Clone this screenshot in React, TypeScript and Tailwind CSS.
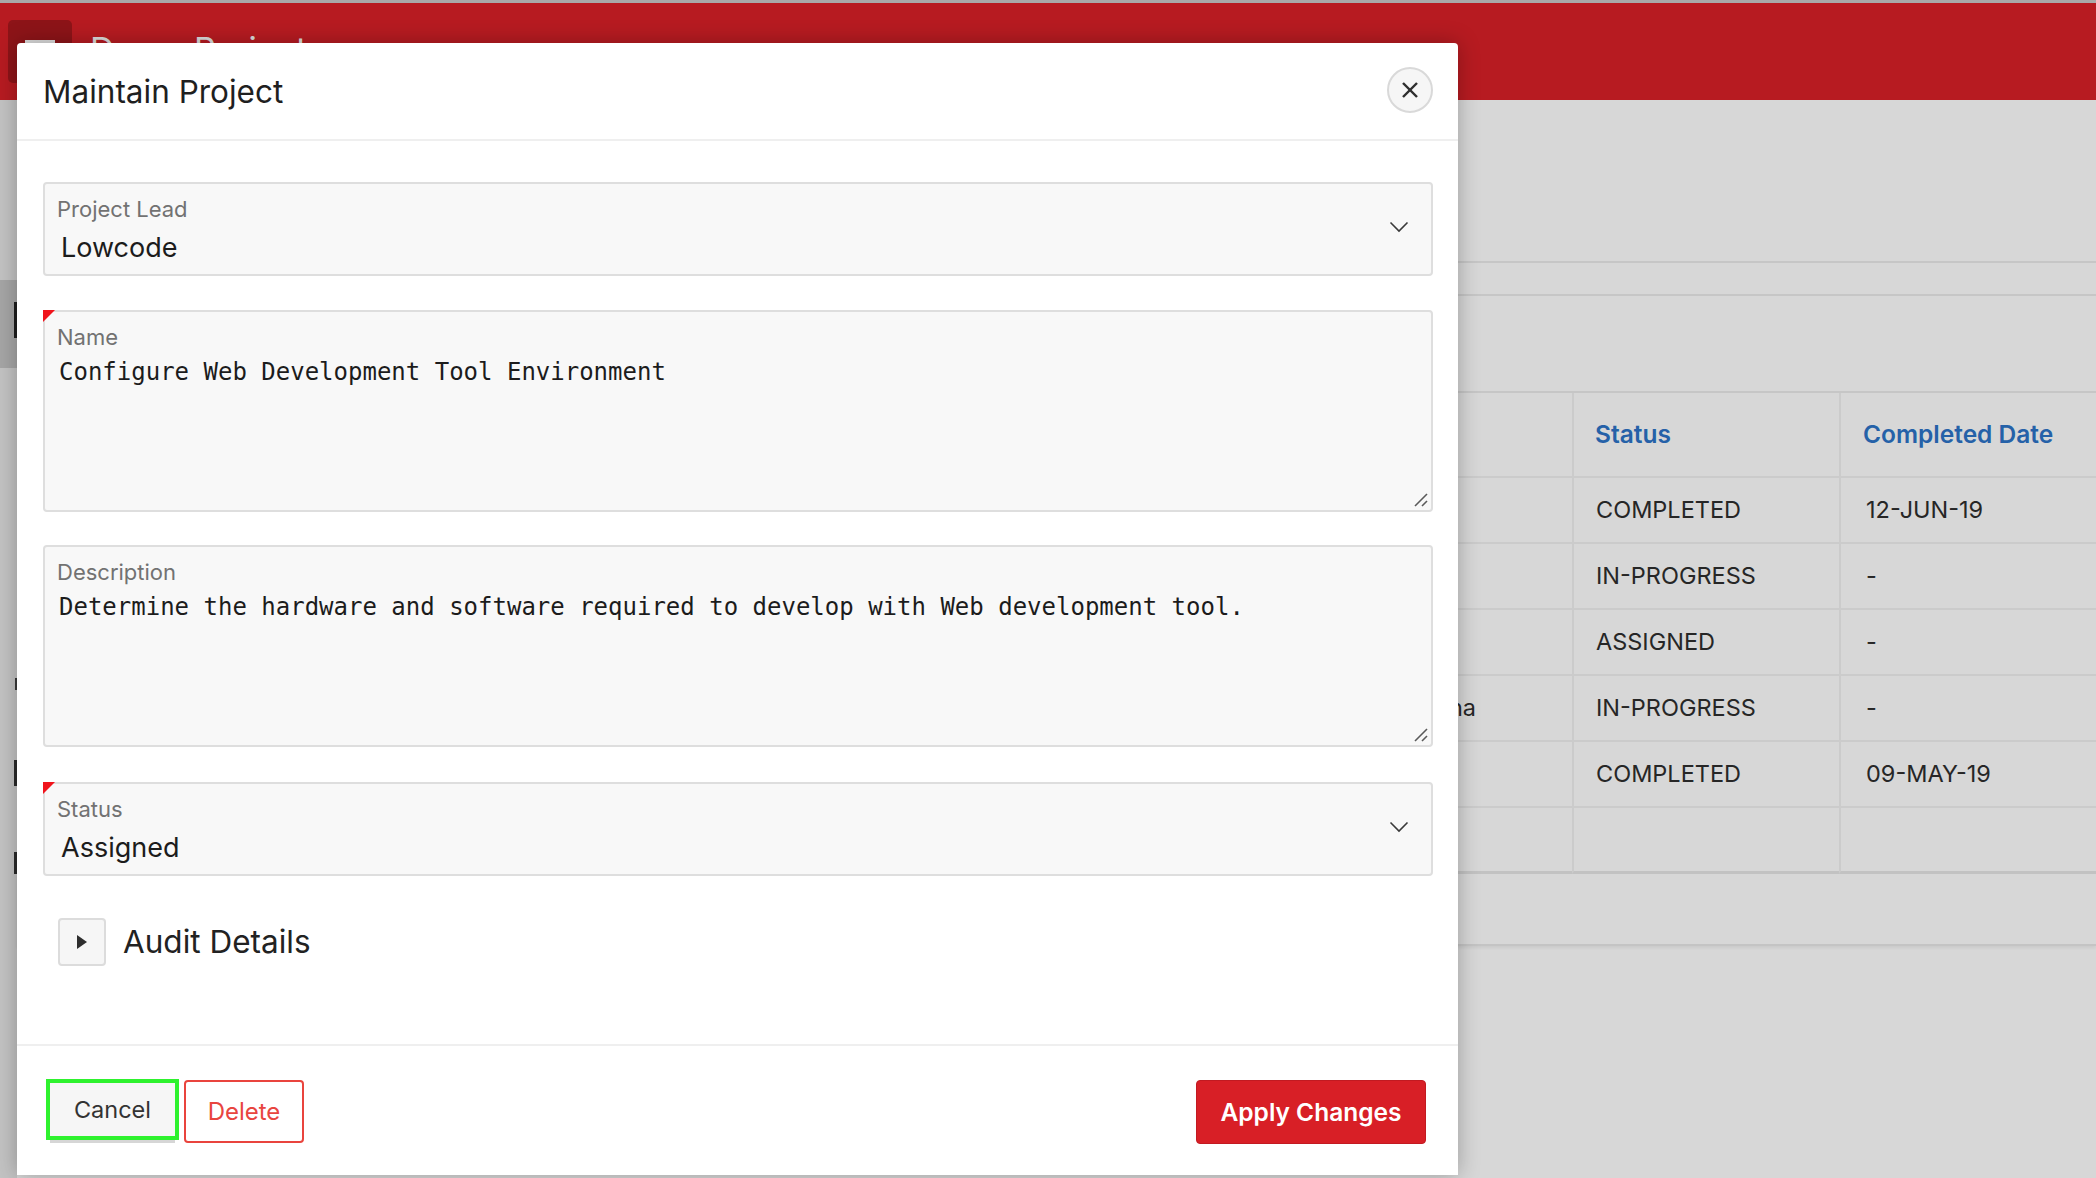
import React from 'react';

const rows = [
  { name: '', status: 'COMPLETED', date: '12-JUN-19' },
  { name: '', status: 'IN-PROGRESS', date: '-' },
  { name: '', status: 'ASSIGNED', date: '-' },
  { name: 'Krishna', status: 'IN-PROGRESS', date: '-' },
  { name: '', status: 'COMPLETED', date: '09-MAY-19' },
  { name: '', status: '', date: '' },
];

function Chevron() {
  return (
    <svg width="20" height="12" viewBox="0 0 20 12" fill="none">
      <polyline points="1.5,1.5 10,10 18.5,1.5" stroke="#3a3a3a" strokeWidth="1.6" />
    </svg>
  );
}

function RequiredMark() {
  return (
    <svg className="absolute -left-[2px] -top-[2px]" width="12" height="12" viewBox="0 0 12 12">
      <polygon points="0,0 12,0 0,12" fill="#f0141c" />
    </svg>
  );
}

function ResizeHandle() {
  return (
    <svg className="absolute bottom-[2px] right-[2px]" width="16" height="16" viewBox="0 0 16 16">
      <line x1="2" y1="14" x2="14" y2="2" stroke="#5a5a5a" strokeWidth="1.6" />
      <line x1="9" y1="14" x2="14" y2="9" stroke="#5a5a5a" strokeWidth="1.6" />
    </svg>
  );
}

function SelectField({ label, value, required }: { label: string; value: string; required?: boolean }) {
  return (
    <div className="relative flex h-[94px] items-start justify-between rounded-[4px] border-2 border-[#dedede] bg-[#f8f8f8] pl-[12px] pr-[22px] pt-[13px]">
      {required && <RequiredMark />}
      <div className="flex flex-col">
        <span className="text-[22px] leading-[24px] text-[#727272]">{label}</span>
        <span className="mt-[10px] pl-[4px] text-[27px] leading-[34px] text-[#1c1c1c]">{value}</span>
      </div>
      <div className="mt-[24px]">
        <Chevron />
      </div>
    </div>
  );
}

function TextField({ label, value, required }: { label: string; value: string; required?: boolean }) {
  return (
    <div className="relative flex h-[202px] flex-col rounded-[4px] border-2 border-[#dedede] bg-[#f8f8f8] pl-[12px] pt-[13px]">
      {required && <RequiredMark />}
      <span className="text-[22px] leading-[24px] text-[#727272]">{label}</span>
      <span className="mt-[8px] pl-[2px] font-['DejaVu_Sans_Mono',monospace] text-[24px] leading-[30px] text-[#1c1c1c]">
        {value}
      </span>
      <ResizeHandle />
    </div>
  );
}

export default function App() {
  const last = rows.length - 1;
  return (
    <div className="relative h-[1178px] w-[2096px] overflow-hidden bg-[#d7d7d7] font-['Inter',sans-serif]">
      {/* PAGE BEHIND THE MODAL */}
      <div className="h-[3px] bg-[#a9a9a9]" />
      <header className="flex h-[97px] items-start bg-[#b71b21] pl-[8px] pt-[17px]">
        <div className="flex h-[63px] w-[64px] flex-col items-center justify-center gap-[6px] rounded-[5px] bg-[#8d1418]">
          <span className="h-[4px] w-[30px] bg-[#dcdcdc]" />
          <span className="h-[4px] w-[30px] bg-[#dcdcdc]" />
          <span className="h-[4px] w-[30px] bg-[#dcdcdc]" />
        </div>
        <span className="ml-[18px] mt-[10px] text-[34px] leading-[40px] text-[#dcdcdc]">Demo Project</span>
      </header>

      <div className="flex h-[1078px]">
        {/* sidebar sliver */}
        <aside className="flex w-[17px] shrink-0 flex-col bg-[#c3c3c3]">
          <div className="h-[180px]" />
          <div className="flex h-[88px] items-center justify-end bg-[#a6a6a6]">
            <span className="mb-[8px] h-[36px] w-[3px] bg-[#1e1e1e]" />
          </div>
          <div className="h-[310px]" />
          <div className="flex justify-end">
            <span className="h-[12px] w-[2px] bg-[#3a3a3a]" />
          </div>
          <div className="h-[70px]" />
          <div className="flex justify-end">
            <span className="h-[26px] w-[3px] bg-[#2a2a2a]" />
          </div>
          <div className="h-[66px]" />
          <div className="flex justify-end">
            <span className="h-[22px] w-[3px] bg-[#2a2a2a]" />
          </div>
        </aside>

        {/* main content */}
        <main className="flex flex-1 flex-col">
          <div className="h-[163px] border-b-2 border-[#c6c6c6]" />
          <div className="h-[33px] border-b-2 border-[#c6c6c6]" />
          <div className="h-[97px] border-b-2 border-[#c6c6c6]" />
          <div className="grid grid-cols-[1fr_267px_257px]">
            <div className="h-[85px] border-b-2 border-[#cbcbcb]" />
            <div className="flex h-[85px] items-center border-b-2 border-l-2 border-[#cbcbcb] pl-[21px] text-[24.5px] font-semibold text-[#2561a8]">
              Status
            </div>
            <div className="flex h-[85px] items-center border-b-2 border-l-2 border-[#cbcbcb] pl-[22px] text-[24.5px] font-semibold text-[#2561a8]">
              Completed Date
            </div>
            {rows.map((row, idx) => (
              <React.Fragment key={idx}>
                <div
                  className={`flex h-[66px] items-center justify-end pr-[96px] text-[23.5px] text-[#262626] ${
                    idx === last ? 'border-b-[3px] border-[#c2c2c2]' : 'border-b-2 border-[#cbcbcb]'
                  }`}
                >
                  {row.name}
                </div>
                <div
                  className={`flex h-[66px] items-center border-l-2 border-[#cbcbcb] pl-[22px] text-[23.5px] text-[#262626] ${
                    idx === last ? 'border-b-[3px] border-b-[#c2c2c2]' : 'border-b-2'
                  }`}
                >
                  {row.status}
                </div>
                <div
                  className={`flex h-[66px] items-center border-l-2 border-[#cbcbcb] pl-[25px] text-[23.5px] text-[#262626] ${
                    idx === last ? 'border-b-[3px] border-b-[#c2c2c2]' : 'border-b-2'
                  }`}
                >
                  {row.date}
                </div>
              </React.Fragment>
            ))}
          </div>
          <div className="h-[72px] border-b-2 border-[#c4c4c4] shadow-[0_2px_3px_rgba(0,0,0,0.06)]" />
        </main>
      </div>

      {/* MODAL */}
      <div className="absolute left-[17px] top-[43px] flex h-[1132px] w-[1441px] flex-col rounded-t-[4px] bg-white shadow-[0_0_22px_rgba(0,0,0,0.28)]">
        <div className="flex h-[98px] shrink-0 items-center justify-between border-b-2 border-[#efefef] pl-[26px] pr-[25px] pt-[2px]">
          <h1 className="text-[31.5px] font-normal text-[#1f1f1f]">Maintain Project</h1>
          <button className="mt-[-4px] flex h-[46px] w-[46px] items-center justify-center rounded-full border-2 border-[#d9d9d9] bg-[#f6f6f6]">
            <svg width="18" height="18" viewBox="0 0 18 18">
              <line x1="2" y1="2" x2="16" y2="16" stroke="#2e2e2e" strokeWidth="2.4" />
              <line x1="16" y1="2" x2="2" y2="16" stroke="#2e2e2e" strokeWidth="2.4" />
            </svg>
          </button>
        </div>

        <div className="flex flex-1 flex-col pl-[26px] pr-[25px] pt-[41px]">
          <SelectField label="Project Lead" value="Lowcode" />
          <div className="mt-[34px]">
            <TextField label="Name" value="Configure Web Development Tool Environment" required />
          </div>
          <div className="mt-[33px]">
            <TextField
              label="Description"
              value="Determine the hardware and software required to develop with Web development tool."
            />
          </div>
          <div className="mt-[35px]">
            <SelectField label="Status" value="Assigned" required />
          </div>
          <div className="ml-[15px] mt-[42px] flex items-center gap-[17px]">
            <button className="flex h-[48px] w-[48px] items-center justify-center rounded-[4px] border-2 border-[#dcdcdc] bg-[#f6f6f6]">
              <svg width="12" height="14" viewBox="0 0 12 14">
                <polygon points="1,0 11,7 1,14" fill="#2e2e2e" />
              </svg>
            </button>
            <span className="text-[31.5px] text-[#222]">Audit Details</span>
          </div>
        </div>

        <div className="flex h-[131px] shrink-0 items-start justify-between border-t-2 border-[#efefef] pl-[29px] pr-[32px] pt-[33px]">
          <div className="flex gap-[5px]">
            <button className="h-[61px] w-[133px] border-4 border-[#2ef22e] bg-[#f6f6f6] text-[23.5px] text-[#333] shadow-[0_7px_0_-4px_#d6d6d6]">
              Cancel
            </button>
            <button className="mt-[1px] h-[63px] w-[120px] rounded-[4px] border-2 border-[#e9443d] bg-white text-[24px] text-[#e8453f]">
              Delete
            </button>
          </div>
          <button className="mt-[1px] h-[64px] w-[230px] rounded-[4px] border border-[#c21a21] bg-[#d81f26] text-[24.5px] font-semibold text-white">
            Apply Changes
          </button>
        </div>
      </div>
    </div>
  );
}
